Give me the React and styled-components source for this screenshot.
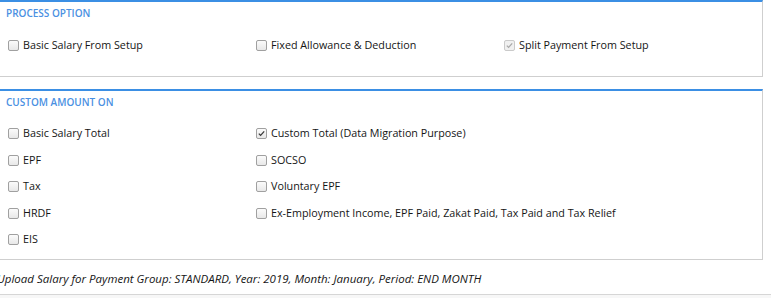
import styled, { createGlobalStyle } from "styled-components";

const GlobalStyle = createGlobalStyle`
  html, body {
    margin: 0;
    background: #fff;
  }
  body {
    font-family: "Open Sans", "Noto Sans", sans-serif;
    color: #222;
    overflow: hidden;
  }
`;

const processOptions = [
  { label: "Basic Salary From Setup" },
  { label: "Fixed Allowance & Deduction" },
  { label: "Split Payment From Setup", checked: true, disabled: true },
];

const customAmounts = [
  { label: "Basic Salary Total" },
  { label: "Custom Total (Data Migration Purpose)", checked: true },
  { label: "EPF" },
  { label: "SOCSO" },
  { label: "Tax" },
  { label: "Voluntary EPF" },
  { label: "HRDF" },
  { label: "Ex-Employment Income, EPF Paid, Zakat Paid, Tax Paid and Tax Relief" },
  { label: "EIS" },
];

function Check({ label, checked, disabled }) {
  return (
    <Option>
      <Box $disabled={disabled}>
        {checked && (
          <svg width="9" height="9" viewBox="0 0 9 9">
            <path
              d="M1.8 4.6 L3.6 6.4 L7.2 2.4"
              fill="none"
              stroke={disabled ? "#a8a8a8" : "#3a3a3a"}
              strokeWidth="1.3"
            />
          </svg>
        )}
      </Box>
      <span>{label}</span>
    </Option>
  );
}

export default function App() {
  return (
    <Page>
      <GlobalStyle />
      <Panel>
        <Title>Process Option</Title>
        <Grid $cols={3} $gap="0" $pad="17px 0 22px">
          {processOptions.map((o) => (
            <Check key={o.label} {...o} />
          ))}
        </Grid>
      </Panel>
      <Panel $top="12px">
        <Title>Custom Amount On</Title>
        <Grid $cols={2} $gap="9.5px" $pad="16px 0 11px">
          {customAmounts.map((o) => (
            <Check key={o.label} {...o} />
          ))}
        </Grid>
      </Panel>
      <Footer>
        Upload Salary for Payment Group: STANDARD, Year: 2019, Month: January, Period: END MONTH
      </Footer>
      <Bottom />
    </Page>
  );
}

const Page = styled.div`
  width: 771px;
  height: 298px;
  display: flex;
  flex-direction: column;
`;

const Panel = styled.section`
  width: 766px;
  margin-left: -3px;
  margin-top: ${(p) => p.$top || "0"};
  box-sizing: border-box;
  border: 1px solid #cfcfcf;
  border-top: 2px solid #3b8fe4;
  padding: 5px 10px 0 10px;
`;

const Title = styled.h2`
  margin: 0;
  font-size: 10px;
  line-height: 13px;
  font-weight: 600;
  text-transform: uppercase;
  color: #4a90e2;
  margin-left: -2px;
`;

const Grid = styled.div`
  display: grid;
  grid-template-columns: repeat(${(p) => p.$cols}, 248px);
  row-gap: ${(p) => p.$gap};
  padding: ${(p) => p.$pad};
`;

const Option = styled.label`
  display: flex;
  align-items: center;
  gap: 4px;
  font-size: 10.75px;
  line-height: 17px;
  color: #151515;
  white-space: nowrap;
`;

const Box = styled.span`
  width: 11px;
  height: 11px;
  box-sizing: border-box;
  border: 1px solid ${(p) => (p.$disabled ? "#cacaca" : "#a0a0a0")};
  border-radius: 2px;
  background: ${(p) =>
    p.$disabled ? "#f0f0f0" : "linear-gradient(#fbfbfb, #e8e8e8)"};
  display: inline-flex;
  align-items: center;
  justify-content: center;
  flex: none;
`;

const Footer = styled.p`
  margin: 10px 0 0 -3px;
  height: 24px;
  font-size: 11.5px;
  line-height: 17px;
  font-style: italic;
  color: #151515;
  border-bottom: 1px solid #d6d6d6;
  white-space: nowrap;
`;

const Bottom = styled.div`
  flex: 1;
  background: #f7f7f7;
`;
